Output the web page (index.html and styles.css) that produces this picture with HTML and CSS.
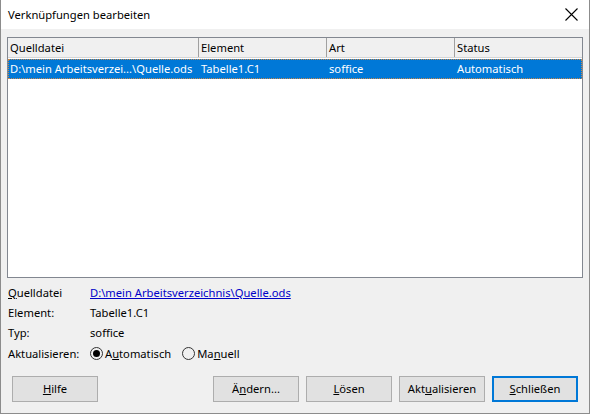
FILE: index.html
```html
<!DOCTYPE html>
<html lang="de">
<head>
  <meta charset="UTF-8">
  <title>Verknüpfungen bearbeiten</title>
  <link rel="stylesheet" href="styles.css">
</head>
<body>

  <div class="dialog">
    <!-- Title bar -->
    <div class="titlebar">
      <span class="title">Verknüpfungen bearbeiten</span>
      <svg class="close" width="13" height="13" viewBox="0 0 13 13">
        <path d="M0.5 0.5 L12.5 12.5 M12.5 0.5 L0.5 12.5" stroke="#000" stroke-width="1.1" fill="none"/>
      </svg>
    </div>

    <div class="content">
      <!-- Link list -->
      <div class="list">
        <div class="row head">
          <div class="cell c1">Quelldatei</div>
          <div class="cell c2">Element</div>
          <div class="cell c3">Art</div>
          <div class="cell c4">Status</div>
        </div>
        <div class="row selected">
          <div class="cell c1">D:\mein Arbeitsverzei...\Quelle.ods</div>
          <div class="cell c2">Tabelle1.C1</div>
          <div class="cell c3">soffice</div>
          <div class="cell c4">Automatisch</div>
        </div>
      </div>

      <!-- Details -->
      <div class="details">
        <div class="field">
          <span class="label"><u>Q</u>uelldatei</span>
          <a class="value link" href="#">D:\mein Arbeitsverzeichnis\Quelle.ods</a>
        </div>
        <div class="field">
          <span class="label">Element:</span>
          <span class="value">Tabelle1.C1</span>
        </div>
        <div class="field">
          <span class="label">Typ:</span>
          <span class="value">soffice</span>
        </div>
        <div class="field">
          <span class="label update">Aktualisieren:</span>
          <label class="radio"><span class="dot on"></span>A<u>u</u>tomatisch</label>
          <label class="radio"><span class="dot"></span>Ma<u>n</u>uell</label>
        </div>
      </div>

      <!-- Buttons -->
      <div class="buttons">
        <button class="btn"><u>H</u>ilfe</button>
        <div class="spacer"></div>
        <button class="btn">Ä<u>n</u>dern...</button>
        <button class="btn"><u>L</u>ösen</button>
        <button class="btn">Akt<u>u</u>alisieren</button>
        <button class="btn default"><u>S</u>chließen</button>
      </div>
    </div>
  </div>

</body>
</html>
```

FILE: styles.css
```css
* { margin: 0; padding: 0; box-sizing: border-box; }

html, body {
  width: 590px;
  height: 414px;
  overflow: hidden;
  font-family: "Noto Sans", "Open Sans", sans-serif;
  font-size: 11.2px;
  color: #000;
  background: #f0f0f0;
}

.dialog {
  width: 590px;
  height: 414px;
  border: 1px solid #8c8c8c;
  border-top: none;
  display: flex;
  flex-direction: column;
  background: #f0f0f0;
}

/* Title bar */
.titlebar {
  height: 29px;
  background: #fff;
  display: flex;
  align-items: center;
  justify-content: space-between;
  padding: 0 11px 0 7px;
}
.title {
  line-height: 16px;
}
.close { display: block; }

/* List */
.content {
  padding: 8px 6px 0 6px;
  flex: 1;
  display: flex;
  flex-direction: column;
}
.list {
  height: 241px;
  background: #fff;
  border: 1px solid #828790;
}
.row {
  display: flex;
  height: 20px;
  line-height: 19px;
}
.row.head {
  background: #f0f0f0;
  border-bottom: 1px solid #d5d5d5;
}
.row.head .cell {
  border-right: 1px solid #a0a0a0;
}
.row.head .c4 { border-right: none; }
.cell {
  padding-left: 2px;
  white-space: nowrap;
  overflow: hidden;
}
.c1 { width: 191px; }
.c2 { width: 128px; }
.c3 { width: 128px; }
.c4 { flex: 1; }

.row.selected {
  margin-top: 1px;
  background: #0078d7;
  color: #fff;
  outline: 1px dotted #c8874a;
  outline-offset: -1px;
}
.row.selected .cell { border-right: 1px solid transparent; }

/* Details */
.details {
  padding: 4px 0 0 1px;
}
.field {
  display: flex;
  align-items: center;
  height: 20.4px;
}
.label { width: 82px; }
.link {
  color: #0000c8;
  text-decoration: underline;
}
.radio {
  display: flex;
  align-items: center;
  margin-right: 11px;
}
.dot {
  width: 13px;
  height: 13px;
  border: 1px solid #333;
  border-radius: 50%;
  margin-right: 2px;
  position: relative;
}
.dot.on::after {
  content: "";
  position: absolute;
  left: 2px;
  top: 2px;
  width: 7px;
  height: 7px;
  border-radius: 50%;
  background: #000;
}

/* Buttons */
.buttons {
  display: flex;
  gap: 7px;
  padding: 12px 5px 0 5px;
}
.spacer { flex: 1; }
.btn {
  width: 86px;
  height: 26px;
  font: inherit;
  background: #e1e1e1;
  border: 1px solid #adadad;
  color: #000;
}
.btn.default {
  border: 2px solid #0078d7;
}
```
